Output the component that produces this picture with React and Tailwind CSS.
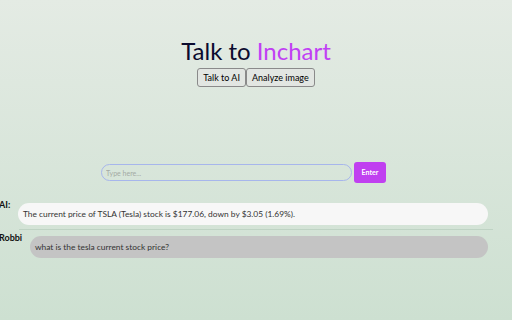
import React, { useState } from 'react';

const App = () => {
    const [mode, setMode] = useState('chat');
    const [text, setText] = useState('');

    const messages = [
        { who: 'AI:', text: 'The current price of TSLA (Tesla) stock is $177.06, down by $3.05 (1.69%).', ai: true },
        { who: 'Robbi', text: 'what is the tesla current stock price?', ai: false },
    ];

    return (
        <div className="w-[512px] h-[320px] overflow-hidden bg-gradient-to-b from-[#e4ebe4] to-[#cde0d1] font-['Lato','Open_Sans',sans-serif]">
            <div className="flex flex-col items-center pt-[35px]">
                <h1 className="text-[24px] leading-[32px] text-[#0b0b2e]">
                    Talk to <span className="text-[#c040f4]">Inchart</span>
                </h1>
                <div className="mt-[1px] flex">
                    <button type="button" onClick={() => setMode('chat')} className="h-[19px] px-[5px] text-[9px] text-black bg-[#e2e6e2] border border-[#8a8a8a] rounded-[3px]">
                        Talk to AI
                    </button>
                    <button type="button" onClick={() => setMode('image')} className="h-[19px] px-[5px] text-[9px] text-black bg-[#e2e6e2] border border-[#8a8a8a] rounded-[3px]">
                        Analyze image
                    </button>
                </div>
            </div>

            <div className="mt-[75px] flex justify-center items-center gap-[2px] pr-[25px]">
                <input
                    value={text}
                    onChange={(e) => setText(e.target.value)}
                    placeholder="Type here..."
                    className="w-[251px] h-[17px] px-[4px] text-[7px] bg-transparent border border-[#a7b6ec] rounded-full outline-none placeholder:text-[#a4aaa4]"
                />
                <button type="button" className="w-[32px] h-[21px] bg-[#c040f0] text-white text-[7px] font-bold rounded-[3px]">
                    Enter
                </button>
            </div>

            <div className="mt-[20px] w-[494px] ml-[-1px] flex flex-col">
                {messages.map((m, i) => (
                    <div key={i} className={i > 0 ? 'border-t border-[#bfd3c4] mt-[4px] pt-[6px] ml-[20px]' : ''}>
                        <div className={`flex ${i > 0 ? 'ml-[-20px]' : ''}`}>
                            <span className="w-[19px] shrink-0 text-[9px] font-bold text-[#111] leading-[12px] mt-[-4px]">{m.who}</span>
                            <div className={`flex-1 mr-[5px] ${m.ai ? 'bg-[#f7f7f7] ml-0' : 'bg-[#c4c4c4] ml-[12px]'} h-[22px] rounded-full flex items-center px-[5px] text-[8.4px] text-[#333]`}>
                                {m.text}
                            </div>
                        </div>
                    </div>
                ))}
            </div>
        </div>
    );
};

export default App;
